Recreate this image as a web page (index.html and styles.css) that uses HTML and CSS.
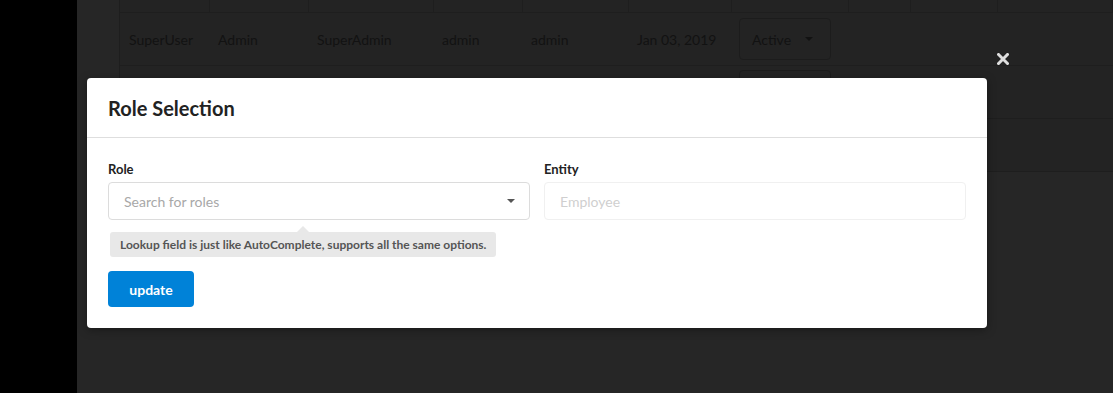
FILE: index.html
```html
<!DOCTYPE html>
<html lang="en">
<head>
    <meta charset="UTF-8">
    <meta name="viewport" content="width=device-width, initial-scale=1.0">
    <title>Users - Role Selection</title>
    <link rel="stylesheet" href="styles.css">
</head>
<body>
    <div class="layout">
        <!-- Sidebar -->
        <aside class="sidebar"></aside>

        <!-- Users table (behind the modal) -->
        <main class="content">
            <div class="table">
                <div class="row head">
                    <div class="cell"></div><div class="cell"></div><div class="cell"></div>
                    <div class="cell"></div><div class="cell"></div><div class="cell"></div>
                    <div class="cell"></div><div class="cell"></div><div class="cell"></div>
                    <div class="cell"></div>
                </div>
                <div class="row">
                    <div class="cell">SuperUser</div>
                    <div class="cell">Admin</div>
                    <div class="cell">SuperAdmin</div>
                    <div class="cell">admin</div>
                    <div class="cell">admin</div>
                    <div class="cell">Jan 03, 2019</div>
                    <div class="cell"><span class="status-btn">Active <span class="caret"></span></span></div>
                    <div class="cell"></div><div class="cell"></div><div class="cell"></div>
                </div>
                <!-- rows hidden under the modal -->
                <div class="row">
                    <div class="cell"></div><div class="cell"></div><div class="cell"></div>
                    <div class="cell"></div><div class="cell"></div><div class="cell"></div>
                    <div class="cell"><span class="status-btn"></span></div>
                    <div class="cell"></div><div class="cell"></div><div class="cell"></div>
                </div>
                <div class="row">
                    <div class="cell"></div><div class="cell"></div><div class="cell"></div>
                    <div class="cell"></div><div class="cell"></div><div class="cell"></div>
                    <div class="cell"><span class="status-btn"></span></div>
                    <div class="cell"></div><div class="cell"></div><div class="cell"></div>
                </div>
            </div>
        </main>
    </div>

    <!-- Modal -->
    <button class="modal-close" aria-label="Close">
        <svg width="12" height="12" viewBox="0 0 12 12">
            <path d="M1.5 1.5 L10.5 10.5 M10.5 1.5 L1.5 10.5" stroke="#dedede" stroke-width="3" stroke-linecap="square"/>
        </svg>
    </button>
    <div class="modal">
        <div class="modal-header">
            <h2>Role Selection</h2>
        </div>
        <div class="modal-body">
            <div class="fields">
                <div class="field">
                    <label>Role</label>
                    <div class="select">
                        <span class="placeholder">Search for roles</span>
                        <span class="select-caret"></span>
                    </div>
                    <div class="tooltip">Lookup field is just like AutoComplete, supports all the same options.</div>
                </div>
                <div class="field">
                    <label>Entity</label>
                    <div class="select disabled">
                        <span class="placeholder">Employee</span>
                    </div>
                </div>
            </div>
            <button class="btn update">update</button>
        </div>
    </div>
</body>
</html>
```

FILE: styles.css
```css
/* Page */
body {
    margin: 0;
    font-family: Lato, "Open Sans", sans-serif;
    background: #252525;
    height: 393px;
    overflow: hidden;
}
.layout {
    display: flex;
    height: 393px;
}
.sidebar {
    width: 77px;
    background: #000;
    flex-shrink: 0;
}
.content {
    flex: 1;
    background: #262626;
    padding-left: 42px;
}

/* Table behind the overlay */
.table {
    background: #232323;
    border-left: 1px solid #1e1e1e;
}
.row {
    display: grid;
    grid-template-columns: 90px 99px 125px 89px 106px 103px 117px 62px 87px 1fr;
    height: 52px;
    border-bottom: 1px solid #1e1e1e;
    align-items: center;
    font-size: 14px;
    color: #121212;
}
.row.head {
    height: 12px;
}
.row.head .cell {
    height: 12px;
    border-right: 1px solid #1e1e1e;
}
.row .cell {
    padding-left: 8px;
    white-space: nowrap;
}
.row .cell:first-child {
    padding-left: 9px;
}
.status-btn {
    display: inline-flex;
    align-items: center;
    gap: 14px;
    width: 92px;
    height: 42px;
    box-sizing: border-box;
    padding-left: 12px;
    margin-left: -1px;
    border: 1px solid #1c1c1c;
    border-radius: 4px;
}
.caret {
    width: 0;
    height: 0;
    border-left: 4px solid transparent;
    border-right: 4px solid transparent;
    border-top: 4px solid #121212;
}

/* Modal */
.modal-close {
    position: absolute;
    left: 997px;
    top: 53px;
    background: none;
    border: none;
    padding: 0;
    line-height: 0;
    cursor: pointer;
}
.modal {
    position: absolute;
    left: 87px;
    top: 78px;
    width: 900px;
    background: #fff;
    border-radius: 4px;
    box-shadow: 0 2px 10px rgba(0, 0, 0, 0.35);
}
.modal-header {
    height: 60px;
    box-sizing: border-box;
    padding: 0 21px;
    display: flex;
    align-items: center;
    border-bottom: 1px solid #dedede;
}
.modal-header h2 {
    margin: 0;
    font-size: 20px;
    font-weight: bold;
    color: #222;
}
.modal-body {
    padding: 23px 21px 21px;
}
.fields {
    display: grid;
    grid-template-columns: 1fr 1fr;
    gap: 14px;
}
.field label {
    display: block;
    font-size: 13px;
    font-weight: bold;
    color: #222;
    margin-bottom: 5px;
    line-height: 16px;
}
.select {
    height: 38px;
    box-sizing: border-box;
    border: 1px solid #dcdcdc;
    border-radius: 4px;
    display: flex;
    align-items: center;
    justify-content: space-between;
    padding: 0 14px 0 15px;
}
.select.disabled {
    border-color: #f0f0f0;
}
.placeholder {
    font-size: 14px;
    color: #a8a8a8;
}
.select.disabled .placeholder {
    color: #cfcfcf;
}
.select-caret {
    width: 0;
    height: 0;
    border-left: 4px solid transparent;
    border-right: 4px solid transparent;
    border-top: 4px solid #555;
}
.tooltip {
    position: relative;
    display: inline-block;
    margin: 12px 0 0 2px;
    padding: 0 10px;
    height: 25px;
    line-height: 25px;
    background: #e8e8e8;
    border-radius: 3px;
    font-size: 12px;
    font-weight: bold;
    color: #555;
}
.tooltip::before {
    content: "";
    position: absolute;
    top: -6px;
    left: 50%;
    margin-left: -6px;
    border-left: 6px solid transparent;
    border-right: 6px solid transparent;
    border-bottom: 6px solid #e8e8e8;
}
.btn {
    border: none;
    border-radius: 4px;
    cursor: pointer;
    font-family: Lato, sans-serif;
}
.btn.update {
    display: block;
    margin-top: 14px;
    width: 86px;
    height: 36px;
    background: #0082d8;
    color: #fff;
    font-size: 14px;
    font-weight: bold;
}
```
